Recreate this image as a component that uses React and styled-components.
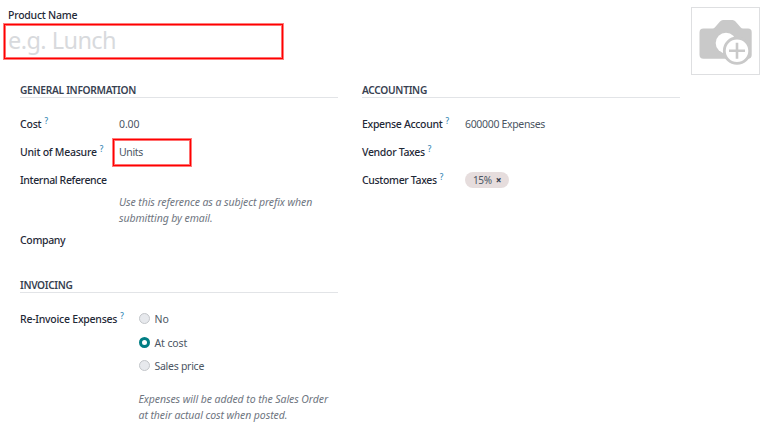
import React from "react";
import styled, { createGlobalStyle } from "styled-components";

const GlobalStyle = createGlobalStyle`
  * { box-sizing: border-box; }
  body {
    margin: 0;
    background: #fff;
    font-family: "Noto Sans", "Open Sans", sans-serif;
    font-size: 10.5px;
    color: #4b5563;
    overflow: hidden;
  }
`;

const Page = styled.main`
  width: 768px;
  height: 428px;
  background: #fff;
`;

const Header = styled.header`
  display: flex;
  justify-content: space-between;
  height: 82px;
  padding: 7px 8px 0 3px;
`;

const NameField = styled.div`
  display: flex;
  flex-direction: column;
`;

const NameLabel = styled.label`
  height: 16px;
  padding-left: 5px;
  line-height: 17px;
  font-weight: 500;
  color: #1f2937;
  letter-spacing: -0.25px;
`;

const redFrame = `
  border: 1px solid #ff7d7d;
  box-shadow: inset 0 0 0 1px #ff0000, inset 0 0 0 2px #ff7070;
`;

const NameInput = styled.div`
  ${redFrame}
  width: 281px;
  height: 37px;
  padding-left: 4px;
  line-height: 32px;
  font-size: 23.5px;
  color: #d8dadd;
  letter-spacing: -0.55px;
`;

const Photo = styled.div`
  width: 69px;
  height: 68px;
  border: 1px solid #dedfe1;
  svg { display: block; }
`;

const Columns = styled.div`
  display: grid;
  grid-template-columns: 318px 318px;
  column-gap: 24px;
  padding-left: 20px;
`;

const Section = styled.section`
  padding-top: ${(p) => p.$top || 0}px;
`;

const SectionTitle = styled.h2`
  height: 16px;
  margin: 0 0 12px;
  border-bottom: 1px solid #e2e4e7;
  font-size: 10.2px;
  line-height: 16px;
  font-weight: 600;
  color: #374151;
  letter-spacing: ${(p) => p.$track || 0}px;
`;

const Row = styled.div`
  display: grid;
  grid-template-columns: ${(p) => p.$label}px 1fr;
  grid-template-rows: 28px;
  align-items: center;
`;

const Label = styled.div`
  display: flex;
  height: 16px;
  white-space: nowrap;
  line-height: 16px;
  font-weight: 500;
  color: #1f2937;
  letter-spacing: ${(p) => p.$track || 0}px;
`;

const Help = styled.sup`
  margin-left: 3px;
  font-size: 8px;
  line-height: 9px;
  font-weight: 500;
  color: #3286b4;
  letter-spacing: 0;
`;

const Value = styled.div`
  line-height: 16px;
  white-space: nowrap;
  letter-spacing: ${(p) => p.$track || 0}px;
`;

const MarkedValue = styled(Value)`
  ${redFrame}
  width: 80px;
  height: 29px;
  margin-left: -7px;
  padding-left: 6px;
  line-height: 27px;
`;

const Hint = styled.p`
  margin: 0 0 0 ${(p) => p.$indent}px;
  line-height: 16px;
  font-style: italic;
  color: #6f7681;
  white-space: nowrap;
  letter-spacing: -0.08px;
`;

const HintLine = styled.span`
  display: block;
`;

const Tag = styled.span`
  display: inline-flex;
  align-items: center;
  gap: 4px;
  width: 44px;
  height: 16px;
  padding-left: 8px;
  border-radius: 8px;
  background: #e6dddd;
  font-size: 10px;
  letter-spacing: -0.35px;
`;

const Remove = styled.span`
  font-size: 10px;
  font-weight: 800;
  color: #374151;
`;

const RadioRow = styled.div`
  display: grid;
  grid-template-columns: 118.5px 1fr;
  padding-top: 6px;
`;

const Radios = styled.div`
  display: flex;
  flex-direction: column;
  gap: 7.5px;
`;

const Option = styled.label`
  display: flex;
  align-items: center;
  gap: 5px;
  height: 16px;
  letter-spacing: ${(p) => p.$track || 0}px;
`;

const Dot = styled.span`
  width: 11px;
  height: 11px;
  margin-top: -1px;
  border-radius: 50%;
  border: ${(p) => (p.$on ? "3.5px solid #017e84" : "1px solid #c3c6ca")};
  background: ${(p) => (p.$on ? "#fff" : "#e7e9ed")};
`;

function CameraIcon() {
  return (
    <svg width="67" height="66" viewBox="0 0 67 66">
      <path
        d="M11.500 20.500h9q1.500 0 2.500-1.200l5-5.800q1.200-1.500 3-1.500h9.500q1.800 0 3 1.500l5 5.800q1 1.200 2.500 1.200h5q3.700 0 3.700 3.700v22.800q0 3.700-3.700 3.700H11.500q-4 0-4-4V24.500q0-4 4-4Z"
        fill="#c9c9c9"
      />
      <circle cx="34" cy="35" r="10.300" fill="#fff" />
      <circle cx="45" cy="42.700" r="12.700" fill="#fff" stroke="#c9c9c9" strokeWidth="2.800" />
      <path d="M45 34.700v16M37 42.700h16" stroke="#c9c9c9" strokeWidth="2.600" />
    </svg>
  );
}

function Field({ label, track, help, width, children }) {
  return (
    <Row $label={width}>
      <Label $track={track}>
        {label}
        {help && <Help>?</Help>}
      </Label>
      {children}
    </Row>
  );
}

export default function App() {
  return (
    <Page>
      <GlobalStyle />
      <Header>
        <NameField>
          <NameLabel>Product Name</NameLabel>
          <NameInput>e.g. Lunch</NameInput>
        </NameField>
        <Photo>
          <CameraIcon />
        </Photo>
      </Header>
      <Columns>
        <div>
          <Section>
            <SectionTitle $track={-0.29}>GENERAL INFORMATION</SectionTitle>
            <Field label="Cost" track={-0.2} help width={99}>
              <Value $track={-0.1}>0.00</Value>
            </Field>
            <Field label="Unit of Measure" track={-0.25} help width={99}>
              <MarkedValue $track={-0.35}>Units</MarkedValue>
            </Field>
            <Field label="Internal Reference" track={-0.37} width={99} />
            <Hint $indent={99}>
              <HintLine>Use this reference as a subject prefix when</HintLine>
              <HintLine>submitting by email.</HintLine>
            </Hint>
            <Field label="Company" track={-0.35} width={99} />
          </Section>
          <Section $top={23}>
            <SectionTitle $track={-0.35}>INVOICING</SectionTitle>
            <RadioRow>
              <Label $track={-0.25}>
                Re-Invoice Expenses<Help>?</Help>
              </Label>
              <Radios>
                <Option><Dot />No</Option>
                <Option $track={-0.1}><Dot $on />At cost</Option>
                <Option $track={-0.27}><Dot />Sales price</Option>
              </Radios>
            </RadioRow>
          </Section>
          <Section $top={17}>
            <Hint $indent={118.5}>
              <HintLine>Expenses will be added to the Sales Order</HintLine>
              <HintLine>at their actual cost when posted.</HintLine>
            </Hint>
          </Section>
        </div>
        <Section>
          <SectionTitle $track={-0.3}>ACCOUNTING</SectionTitle>
          <Field label="Expense Account" track={-0.33} help width={103}>
            <Value $track={-0.33}>600000 Expenses</Value>
          </Field>
          <Field label="Vendor Taxes" track={-0.33} help width={103} />
          <Field label="Customer Taxes" track={-0.35} help width={103}>
            <Tag>15% <Remove>×</Remove></Tag>
          </Field>
        </Section>
      </Columns>
    </Page>
  );
}
